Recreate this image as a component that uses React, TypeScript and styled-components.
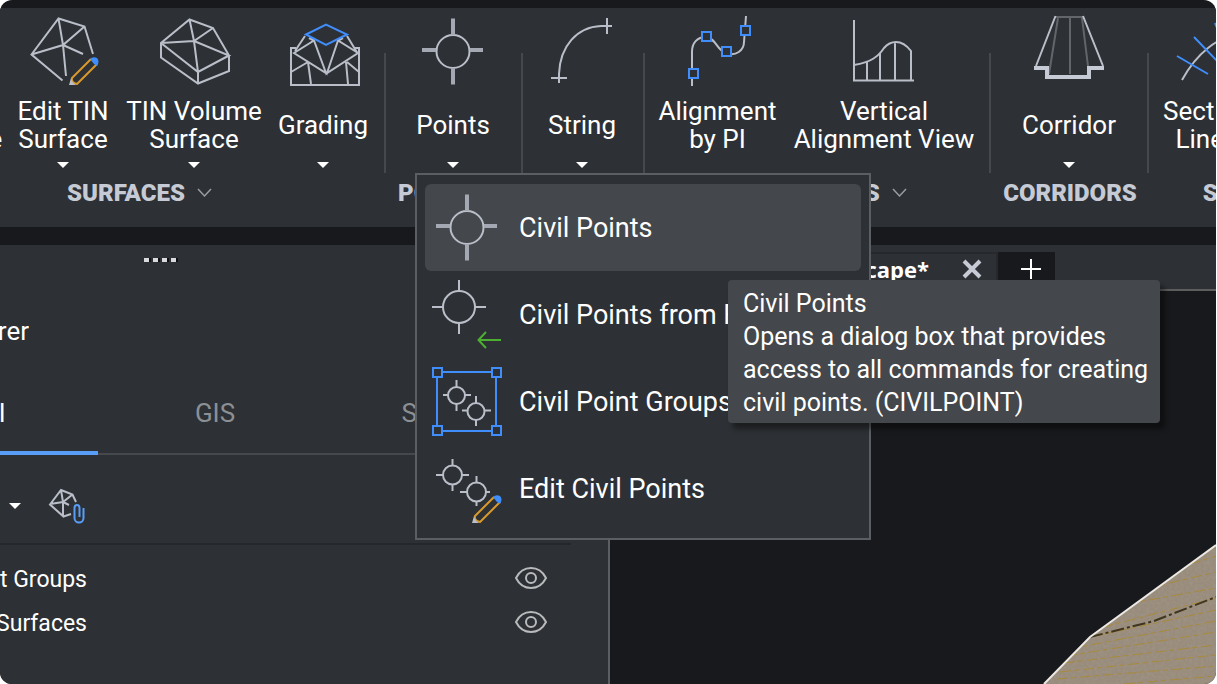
import React from "react";
import styled, { createGlobalStyle } from "styled-components";

const color = {
  shell: "#18191c",
  surface: "#2d3034",
  raised: "#44474b",
  line: "#5b5e63",
  divider: "#45484c",
  stroke: "#b9bec8",
  bright: "#c5cad4",
  muted: "#8b9095",
  blue: "#3f8efc",
  accent: "#589df6",
  orange: "#d99a2b",
  green: "#4caf32",
};

const GlobalStyle = createGlobalStyle`
  *, *::before, *::after { box-sizing: border-box; }
  body { margin: 0; background: #fff; font-family: Roboto, sans-serif; color: #fff; }
  button { font: inherit; color: inherit; background: none; border: 0; padding: 0; margin: 0; }
  ul { list-style: none; margin: 0; padding: 0; }
  h1, h2, p { margin: 0; font: inherit; }
  svg { display: block; flex: none; overflow: visible; }
`;

const Window = styled.div`
  display: flex;
  flex-direction: column;
  min-height: 100vh;
  margin-right: 1px;
  padding-top: 8px;
  background: ${color.shell};
  border-radius: 12px;
  overflow: hidden;
`;

const Ribbon = styled.header`
  position: relative;
  z-index: 2;
  display: flex;
  background: ${color.surface};
`;

const Group = styled.section<{ $width: number; $bleed?: number }>`
  position: relative;
  flex: none;
  width: ${(p) => p.$width}px;
  margin-left: ${(p) => -(p.$bleed ?? 0)}px;
  &::after {
    content: "";
    position: absolute;
    right: 0;
    top: 45px;
    height: 120px;
    width: 2px;
    background: ${color.divider};
  }
`;

const Tools = styled.div<{ $inset?: number }>`
  display: flex;
  height: 165px;
  padding-left: ${(p) => p.$inset ?? 0}px;
`;

const Tool = styled.button<{ $width: number }>`
  flex: none;
  width: ${(p) => p.$width}px;
  padding-top: 8px;
  display: flex;
  flex-direction: column;
  align-items: center;
  justify-content: flex-start;
`;

const ToolLabel = styled.span`
  display: flex;
  align-items: center;
  height: 56px;
  margin-top: 9px;
  font-size: 26px;
  line-height: 28px;
  white-space: pre;
  text-align: center;
`;

const Caret = styled.span`
  margin-top: 9px;
  border: 6px solid transparent;
  border-top-color: #fff;
  border-bottom: 0;
`;

const GroupName = styled.h2`
  display: flex;
  align-items: center;
  justify-content: center;
  gap: 12px;
  height: 54px;
  padding-bottom: 14px;
  font-size: 24px;
  font-weight: 900;
  color: ${color.bright};
`;

const Menu = styled.ul`
  position: absolute;
  z-index: 3;
  top: 165px;
  left: 29px;
  width: 456px;
  padding: 9px 8px 6px;
  background: ${color.surface};
  border: 2px solid ${color.line};
`;

const MenuRow = styled.li`
  position: relative;
`;

const MenuButton = styled.button<{ $active?: boolean }>`
  display: flex;
  align-items: center;
  gap: 16px;
  width: 100%;
  height: 87px;
  padding-left: 6px;
  font-size: 27px;
  border-radius: 6px;
  white-space: nowrap;
  overflow: hidden;
  background: ${(p) => (p.$active ? color.raised : "transparent")};
`;

const Tooltip = styled.div`
  position: absolute;
  z-index: 1;
  top: 96px;
  left: 303px;
  width: 432px;
  padding: 7px 0 4px 15px;
  font-size: 25px;
  line-height: 33px;
  white-space: pre;
  background: ${color.raised};
  border-radius: 4px;
  box-shadow: 5px 6px 5px rgba(0, 0, 0, 0.4);
`;

const Workspace = styled.main`
  flex: 1;
  display: flex;
  margin-top: 18px;
`;

const Panel = styled.aside`
  flex: 0 1 610px;
  min-width: 0;
  background: ${color.surface};
  border-right: 2px solid ${color.line};
  overflow: hidden;
`;

const Grip = styled.div`
  display: flex;
  gap: 4px;
  height: 60px;
  padding: 13px 0 0 144px;
`;

const GripDot = styled.i`
  width: 5px;
  height: 4px;
  background: #d8dade;
  box-shadow: 2px 0 0 #101112;
`;

const Clip = styled.span<{ $width: number }>`
  display: flex;
  justify-content: flex-end;
  flex: none;
  width: ${(p) => p.$width}px;
  white-space: nowrap;
  overflow: hidden;
`;

const PanelTitle = styled.h1`
  height: 70px;
  font-size: 26px;
  line-height: 52px;
`;

const TabList = styled.div`
  display: flex;
  justify-content: flex-end;
  padding-right: 42px;
  box-shadow: inset 0 -2px 0 #45484c;
`;

const PanelTab = styled.button<{ $active?: boolean }>`
  flex: 0 0 234px;
  height: 80px;
  font-size: 26px;
  color: ${(p) => (p.$active ? "#fff" : color.muted)};
  border-bottom: 4px solid ${(p) => (p.$active ? color.accent : "transparent")};
`;

const PanelTools = styled.div`
  display: flex;
  align-items: center;
  gap: 28px;
  height: 90px;
  margin-right: 37px;
  padding: 14px 0 0 9px;
  border-bottom: 2px solid #25272b;
`;

const PanelCaret = styled(Caret)`
  margin-top: 0;
`;

const IconButton = styled.button`
  display: flex;
`;

const Tree = styled.ul`
  padding-top: 11px;
`;

const TreeName = styled(Clip)`
  padding-top: 4px;
`;

const TreeRow = styled.li`
  display: flex;
  align-items: center;
  justify-content: space-between;
  height: 44px;
  padding-right: 60px;
  font-size: 23px;
  line-height: 40px;
`;

const Documents = styled.section`
  flex: 1;
  min-width: 0;
  display: flex;
  flex-direction: column;
`;

const DocumentTabs = styled.div`
  display: flex;
  height: 46px;
  padding-top: 7px;
  background: ${color.surface};
  border-bottom: 2px solid #5d5d5d;
`;

const DocumentTab = styled.div`
  display: flex;
  align-items: center;
  justify-content: flex-end;
  gap: 33px;
  width: 388px;
  padding: 0 14px 5px 0;
  font: 700 22px "Open Sans", sans-serif;
  border-top: 2px solid #26282c;
  border-right: 2px solid #26282c;
`;

const NewTab = styled.button`
  display: flex;
  align-items: center;
  justify-content: center;
  width: 57px;
  padding: 0 0 4px 8px;
  background: ${color.shell};
`;

const Canvas = styled.div`
  flex: 1;
  display: flex;
  align-items: flex-end;
  justify-content: flex-end;
`;

function Icon({ children, view = "0 0 72 72", w = 72, h = 72 }: {
  children: React.ReactNode; view?: string; w?: number; h?: number;
}) {
  return (
    <svg width={w} height={h} viewBox={view} fill="none" stroke={color.stroke} strokeWidth="2" aria-hidden="true">
      {children}
    </svg>
  );
}

const Pencil = () => (
  <g strokeLinejoin="round">
    <path d="M21 2L2 21Q1 26 7 27L27 7" stroke={color.orange} strokeWidth="2" />
    <path d="M20 2Q23-1 27 1Q30 4 27 9L24 7Z" fill={color.blue} stroke="none" />
    <path d="M1 21L-1 28L6 28Q2 26 1 21Z" fill={color.stroke} stroke="none" />
  </g>
);

const EditTinIcon = () => (
  <Icon view="27 16 72 72">
    <path d="M93 54L84.500 26.500L58.500 18.500L31.500 54.500L62.500 80.500M58.500 18.500L63 45L66 76M84.500 26.500L63 45L31.500 54.500M63 45L83 54" />
    <g transform="translate(70 57)"><Pencil /></g>
  </Icon>
);

const TinVolumeIcon = () => (
  <Icon view="158 16 72 72">
    <path d="M189.500 19.500L213 28L229 55.500V71L198 83.500L161 57.500V43ZM189.500 19.500L194 41L198 72V83.500M161 43L194 41L213 28M194 41L229 55.500L198 72L161 43" />
  </Icon>
);

const GradingIcon = () => (
  <Icon view="287 16 72 72">
    <path d="M296 48H291V85H359V48H354" />
    <path d="M305 36L295 51M347 36L358 54M294 53L314 40.500L326 73ZM338 40.500L327 73L358 53ZM314 40.500L309 38M338 40.500L343 38M308 62L291 72M308 62L311 84M347 62L359 72M346 62L348 84" />
    <path d="M306 34.500L326 24.500L347 34.500L326 45Z" stroke={color.blue} />
  </Icon>
);

const PointIcon = () => (
  <Icon>
    <circle cx="36" cy="35.500" r="16.500" />
    <path d="M36 2.500V19M36 52V68.500M5 34H19M53 34H66" strokeWidth="4" stroke="#a3a8b2" />
  </Icon>
);

const StringIcon = () => (
  <Icon view="546 16 72 72">
    <path d="M559 83V74C560 46 577 27 601 26H612M551 78H567M607 18V34" />
  </Icon>
);

const AlignmentIcon = () => (
  <Icon view="682 16 72 72">
    <path d="M692 86V52C692 43 697 37 706 37C716 38 717 51 726 53C736 57 744 50 744 42L746 16" />
    <g fill={color.surface} stroke={color.blue}>
      <path d="M689 69h9v9h-9zM702 32h9v9h-9zM722 47h9v9h-9zM741 26h9v9h-9z" />
    </g>
  </Icon>
);

const ProfileIcon = () => (
  <Icon view="849 16 72 72">
    <path d="M855 20V80.500H915M855 65C872 62 879 57 885 48C891 41 902 38 912 51V80M868 62V80M881 53V80M896 42V80" />
  </Icon>
);

const CorridorIcon = () => (
  <Icon view="1033 16 72 72">
    <path d="M1055 17H1083M1058 18L1049 74M1082 18L1089 74M1070 17V74" stroke="#62666b" />
    <path d="M1055.500 16L1036 66M1083 16L1103 66" />
    <path d="M1034 68H1047V77H1089V68H1104" stroke={color.bright} strokeWidth="4" />
  </Icon>
);

const SectionIcon = () => (
  <Icon view="1170 16 72 72">
    <path d="M1181 80Q1192 60 1207 48T1240 34" />
    <path d="M1176 56L1207 74M1193 37L1218 63M1214 23L1225 50" stroke={color.blue} />
  </Icon>
);

const PointImportIcon = () => (
  <Icon>
    <circle cx="28" cy="28" r="16" />
    <path d="M28 1V12M28 44V55M1 28H12M44 28H55" />
    <path d="M70 61H47M55 53L47.500 61L55 69" stroke={color.green} />
  </Icon>
);

const PointGroupIcon = () => (
  <Icon>
    <path d="M25.500 14V21M25.500 38V45M12 29H17M34 29H40M45 30V37M45 54V60M31 44.500H36M53 44.500H60" />
    <circle cx="25.500" cy="29.500" r="8.500" />
    <circle cx="45" cy="45.500" r="8.500" />
    <g stroke={color.blue}>
      <path d="M11 6H60M11 65H60M6 11V60M65 11V60" />
      <path d="M2 2h9v9h-9zM61 2h9v9h-9zM2 60h9v9h-9zM61 60h9v9h-9z" />
    </g>
  </Icon>
);

const PointEditIcon = () => (
  <Icon>
    <circle cx="21.500" cy="22" r="9.500" />
    <circle cx="45.500" cy="39" r="9.500" />
    <path d="M21.500 6V12M21.500 32V38M5 22H12M31 22H38M45.500 23V30M45.500 49V53M29 39H36M55 39H59" />
    <g transform="translate(42 42)"><Pencil /></g>
  </Icon>
);

const TinAttachIcon = () => (
  <Icon view="49 486 36 38" w={36} h={38}>
    <path d="M76 501L72.500 493.500L61 489L50 503.500L63.500 515.500L71 513M61 489L63 501V515M72.500 493.500L63 501L50 503M63 501L69 504" />
    <path d="M83.500 507V517A4.500 4.500 0 0 1 74.500 517V507Q74.500 504 77 504T79.500 507V516" stroke={color.accent} />
  </Icon>
);

const EyeIcon = () => (
  <Icon view="0 0 34 24" w={34} h={24}>
    <g stroke="#b9babc">
      <path d="M2 12Q7 2 17 2T32 12Q27 22 17 22T2 12Z" />
      <circle cx="17" cy="12" r="5" />
    </g>
  </Icon>
);

const Chevron = () => (
  <Icon view="0 0 15 10" w={15} h={10}>
    <path d="M1 1L7.500 8L14 1" stroke="#9a9da2" strokeWidth="1.500" />
  </Icon>
);

const contours = [
  "M126 15L172 3", "M102 32L172 11", "M80 49L172 27", "M60 63L172 43", "M36 88L172 53",
  "M28 96L172 65", "M25 104L172 76", "M22 111L172 87", "M20 118L172 100", "M16 127L172 110", "M13 134L172 121", "M80 139L172 131",
];

const Terrain = () => (
  <svg width="172" height="139" viewBox="0 0 172 139" role="img" aria-label="Terrain surface">
    <defs>
      <filter id="grain" x="0" y="0" width="100%" height="100%">
        <feTurbulence type="fractalNoise" baseFrequency="0.350" numOctaves="2" seed="4" />
        <feColorMatrix values="0 0 0 0 0.350  0 0 0 0 0.310  0 0 0 0 0.250  0 0 0 1.200 -0.450" />
      </filter>
      <clipPath id="ground"><path d="M172 0L46 92L0 139H172Z" /></clipPath>
    </defs>
    <g clipPath="url(#ground)">
      <rect width="172" height="139" fill="#998c7c" />
      <rect width="172" height="139" filter="url(#grain)" />
      {contours.map((d) => (
        <path key={d} d={d} stroke="#a88a3c" strokeWidth="1" strokeDasharray="11 3 5 4" />
      ))}
      <path d="M46 92L110 76L172 52" fill="none" stroke="#40361f" strokeWidth="2" strokeDasharray="13 3 3 3" />
    </g>
    <path d="M172 0L46 92L0 139" fill="none" stroke="#ece9e4" strokeWidth="2" />
  </svg>
);

const menuItems = [
  { label: "Civil Points", icon: <PointIcon />, active: true },
  { label: "Civil Points from File", icon: <PointImportIcon /> },
  { label: "Civil Point Groups", icon: <PointGroupIcon /> },
  { label: "Edit Civil Points", icon: <PointEditIcon /> },
];

function RibbonTool({ width, icon, label, menu = true }: {
  width: number; icon?: React.ReactNode; label: string; menu?: boolean;
}) {
  return (
    <Tool type="button" $width={width}>
      {icon ?? <Icon>{null}</Icon>}
      <ToolLabel>{label}</ToolLabel>
      {menu && <Caret />}
    </Tool>
  );
}

export default function App() {
  return (
    <>
      <GlobalStyle />
      <Window>
        <Ribbon>
          <Group $width={493} $bleed={107}>
            <Tools $inset={12}>
              <RibbonTool width={105} label={"TIN\nSurface"} menu={false} />
              <RibbonTool width={106} icon={<EditTinIcon />} label={"Edit TIN\nSurface"} />
              <RibbonTool width={156} icon={<TinVolumeIcon />} label={"TIN Volume\nSurface"} />
              <RibbonTool width={102} icon={<GradingIcon />} label="Grading" />
            </Tools>
            <GroupName>SURFACES <Chevron /></GroupName>
          </Group>
          <Group $width={137}>
            <Tools>
              <RibbonTool width={134} icon={<PointIcon />} label="Points" />
            </Tools>
            <GroupName>POINTS <Chevron /></GroupName>
            <Menu>
              {menuItems.map((item) => (
                <MenuRow key={item.label}>
                  <MenuButton type="button" $active={item.active}>
                    {item.icon}
                    {item.label}
                  </MenuButton>
                  {item.active && (
                    <Tooltip role="tooltip">
                      <p>Civil Points</p>
                      <p>{"Opens a dialog box that provides\naccess to all commands for creating\ncivil points. (CIVILPOINT)"}</p>
                    </Tooltip>
                  )}
                </MenuRow>
              ))}
            </Menu>
          </Group>
          <Group $width={122}>
            <Tools>
              <RibbonTool width={118} icon={<StringIcon />} label="String" />
            </Tools>
            <GroupName>STRINGS</GroupName>
          </Group>
          <Group $width={346}>
            <Tools>
              <RibbonTool width={145} icon={<AlignmentIcon />} label={"Alignment\nby PI"} menu={false} />
              <RibbonTool width={188} icon={<ProfileIcon />} label={"Vertical\nAlignment View"} menu={false} />
            </Tools>
            <GroupName>ALIGNMENTS <Chevron /></GroupName>
          </Group>
          <Group $width={158}>
            <Tools>
              <RibbonTool width={156} icon={<CorridorIcon />} label="Corridor" />
            </Tools>
            <GroupName>CORRIDORS</GroupName>
          </Group>
          <Group $width={222}>
            <Tools>
              <RibbonTool width={115} icon={<SectionIcon />} label={"Section\nLines"} menu={false} />
            </Tools>
            <GroupName>SECTIONS</GroupName>
          </Group>
        </Ribbon>

        <Workspace>
          <Panel>
            <Grip>
              {[0, 1, 2, 3].map((n) => <GripDot key={n} />)}
            </Grip>
            <PanelTitle><Clip $width={29}>Civil Explorer</Clip></PanelTitle>
            <TabList role="tablist">
              <PanelTab type="button" role="tab" aria-selected="true" $active>Civil</PanelTab>
              <PanelTab type="button" role="tab" aria-selected="false">GIS</PanelTab>
              <PanelTab type="button" role="tab" aria-selected="false">Settings</PanelTab>
            </TabList>
            <PanelTools>
              <IconButton type="button" aria-label="More"><PanelCaret /></IconButton>
              <IconButton type="button" aria-label="Attach surface"><TinAttachIcon /></IconButton>
            </PanelTools>
            <Tree>
              {["Point Groups", "TIN Surfaces"].map((name) => (
                <TreeRow key={name}>
                  <TreeName $width={87}>{name}</TreeName>
                  <IconButton type="button" aria-label={`Show ${name}`}><EyeIcon /></IconButton>
                </TreeRow>
              ))}
            </Tree>
          </Panel>
          <Documents>
            <DocumentTabs>
              <DocumentTab>
                Landscape*
                <IconButton type="button" aria-label="Close">
                  <Icon view="0 0 20 20" w={20} h={20}>
                    <path d="M2 2L18 18M18 2L2 18" stroke={color.bright} strokeWidth="4" />
                  </Icon>
                </IconButton>
              </DocumentTab>
              <NewTab type="button" aria-label="New tab">
                <Icon view="0 0 20 20" w={20} h={20}>
                  <path d="M10 0V20M0 10H20" stroke="#fff" />
                </Icon>
              </NewTab>
            </DocumentTabs>
            <Canvas><Terrain /></Canvas>
          </Documents>
        </Workspace>
      </Window>
    </>
  );
}
